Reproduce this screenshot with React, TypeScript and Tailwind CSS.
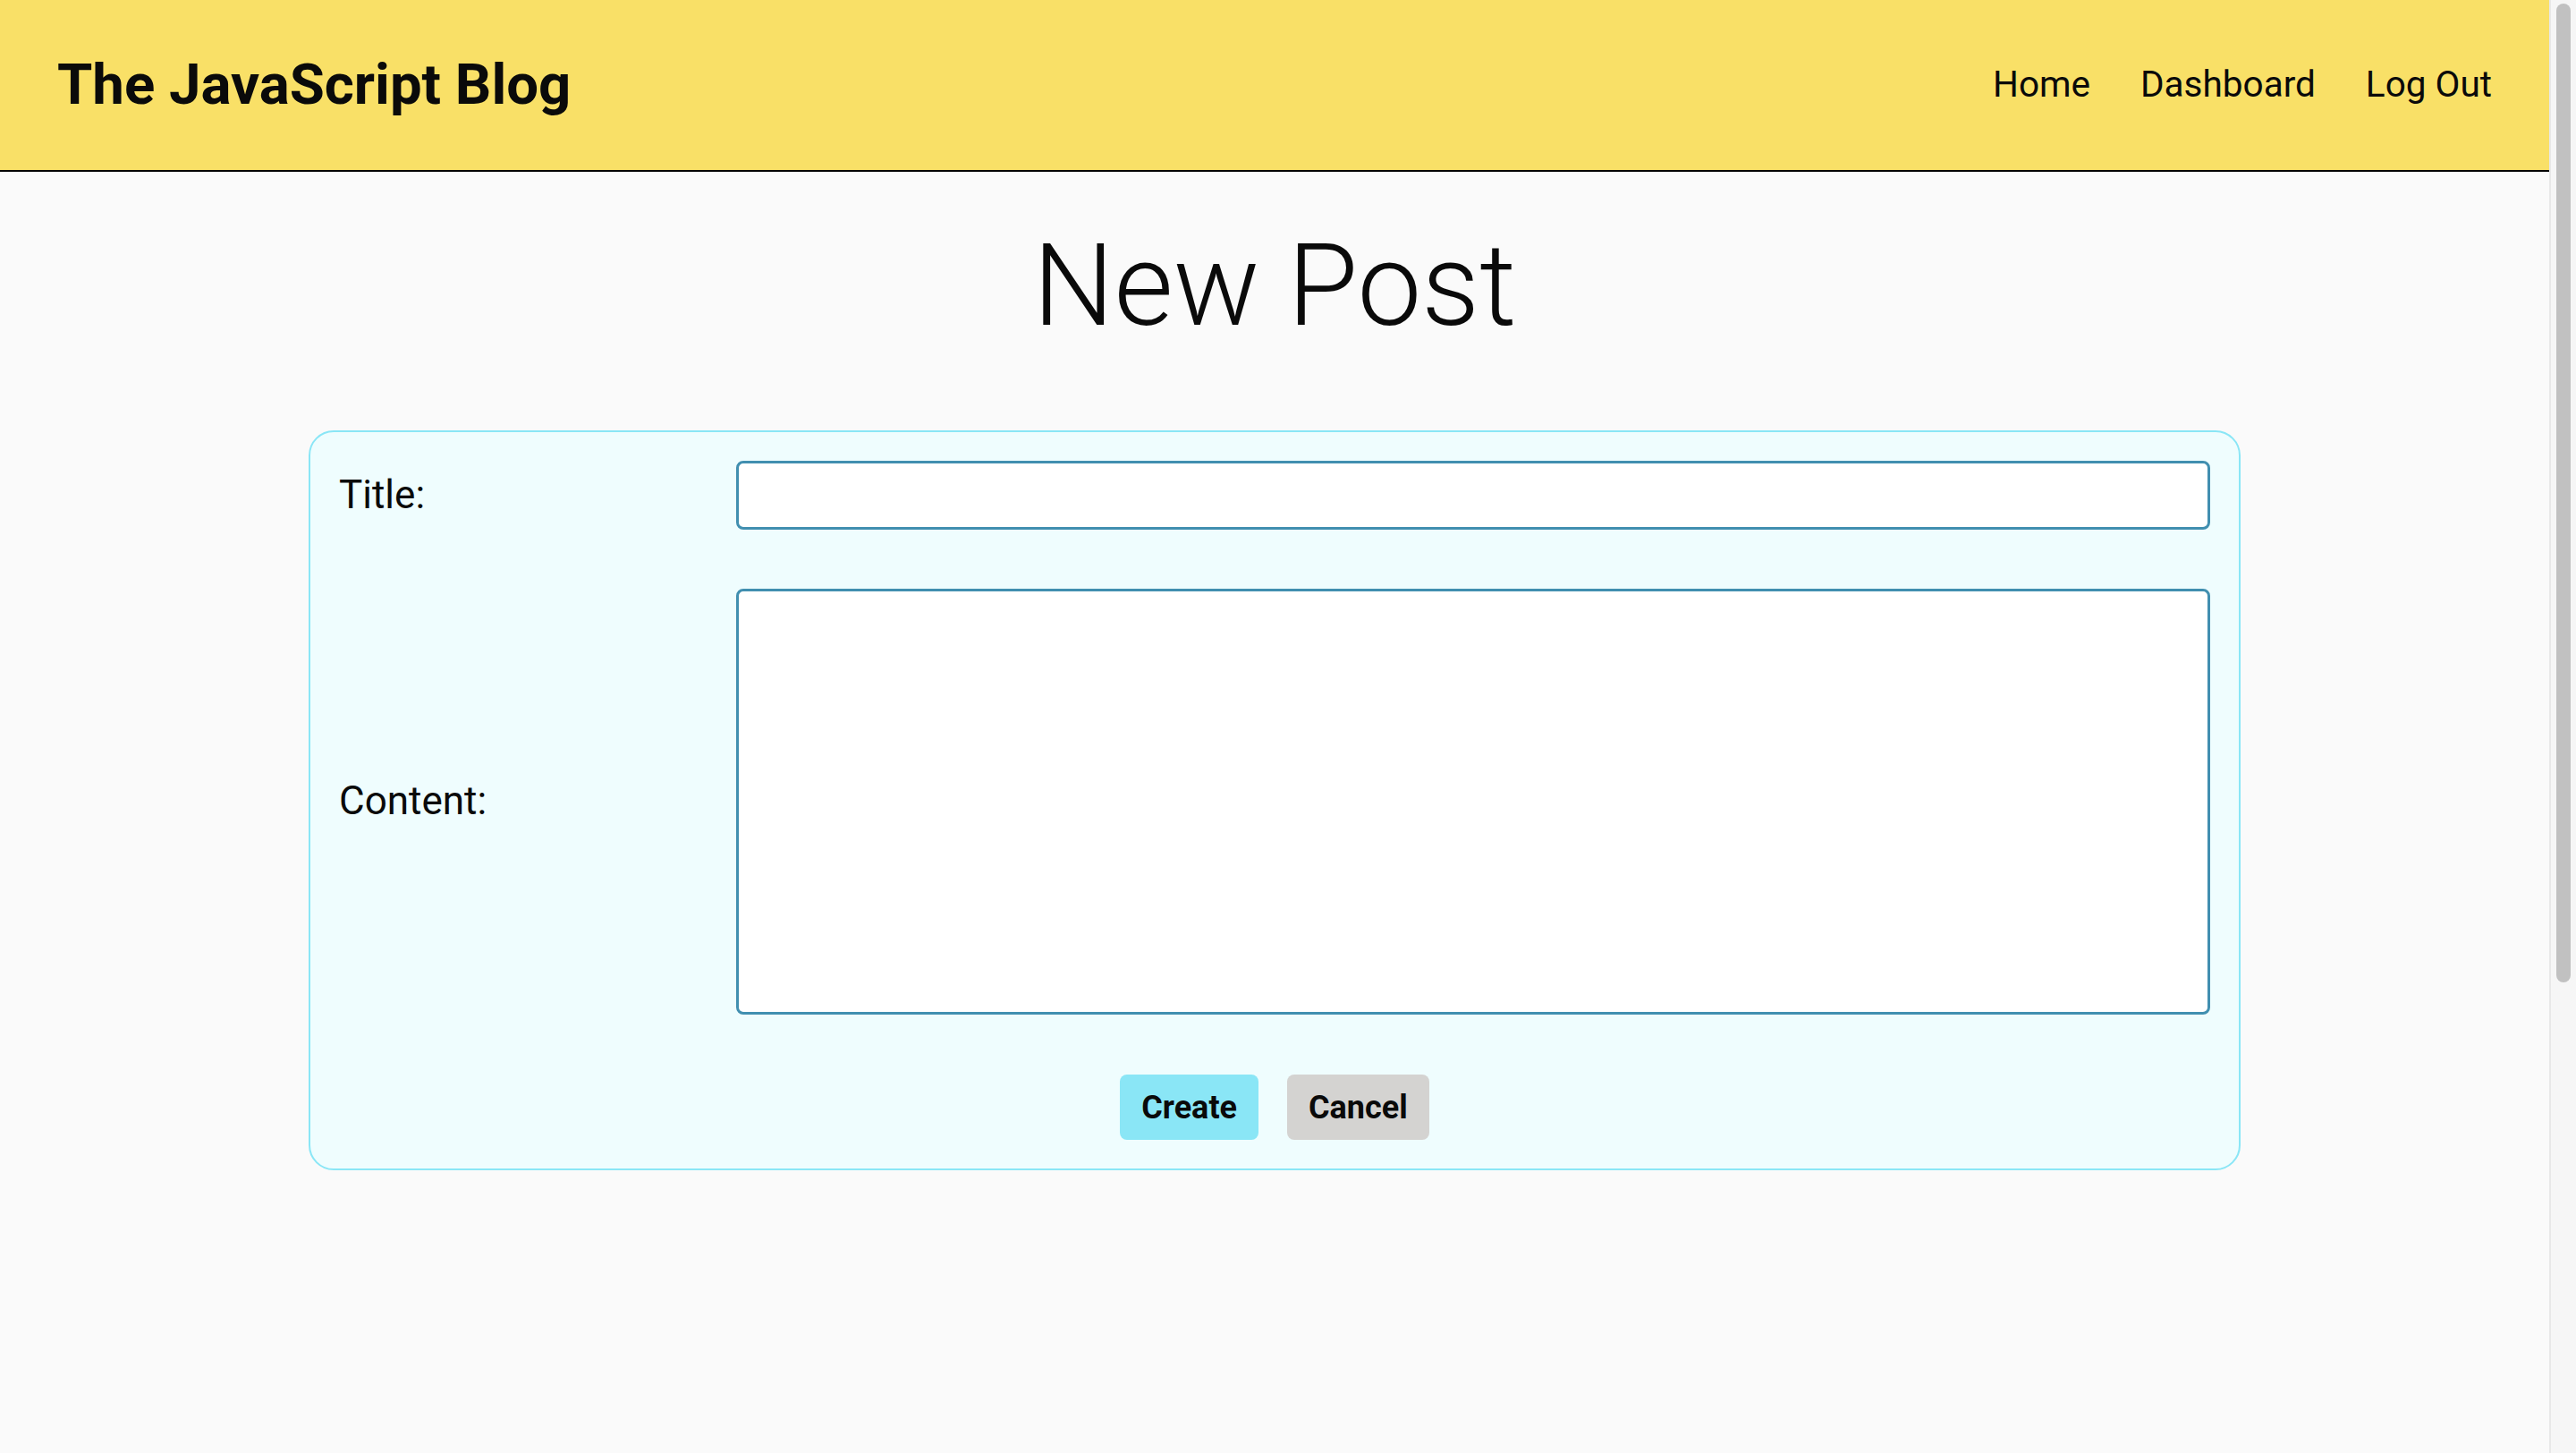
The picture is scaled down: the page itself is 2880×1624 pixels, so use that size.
import React from "react";

function Scrollbar() {
  return (
    <div className="w-[30px] shrink-0 h-full border-l-2 border-[#e8e8e8] bg-[#f6f6f6] pt-[4px] pl-[6px]">
      <div className="h-[1094px] w-[16px] rounded-full bg-[#c1c1c1]" />
    </div>
  );
}

export default function App() {
  return (
    <div
      className="flex h-screen overflow-hidden bg-[#fafafa] text-[#0a0a0a]"
      style={{ fontFamily: "Roboto, 'Liberation Sans', sans-serif" }}
    >
      <div className="flex-1 min-w-0 overflow-hidden">
        <div className="min-h-[2410px]">
          <header className="h-[192px] bg-[#f9e067] border-b-2 border-black flex items-center justify-between px-[64px]">
            <h1 className="text-[63.5px] font-bold leading-[1.172]">The JavaScript Blog</h1>
            <nav className="flex items-center gap-[56px] text-[40.5px] leading-[1.172]">
              <a href="#">Home</a>
              <a href="#">Dashboard</a>
              <a href="#">Log Out</a>
            </nav>
          </header>

          <main className="pt-[52px] flex flex-col items-center">
            <h2 className="text-[128px] font-light leading-[1.172]">New Post</h2>
            <form className="mt-[87px] w-[2160px] rounded-[28px] border-2 border-[#8ae6f6] bg-[#effdfe] p-[32px]">
              <div className="grid grid-cols-[444px_1fr] items-center gap-y-[66px] text-[44px] leading-[1.172]">
                <label htmlFor="title">Title:</label>
                <input
                  id="title"
                  type="text"
                  className="h-[77px] rounded-[8px] border-[3px] border-[#418fb0] bg-white px-3 outline-none"
                />
                <label htmlFor="content">Content:</label>
                <textarea
                  id="content"
                  className="h-[476px] resize-none rounded-[8px] border-[3px] border-[#418fb0] bg-white p-3 outline-none"
                />
              </div>
              <div className="mt-[67px] flex justify-center gap-[32px]">
                <button
                  type="submit"
                  className="h-[73px] rounded-[8px] bg-[#8ae6f6] px-[24px] text-[36px] font-bold"
                >
                  Create
                </button>
                <button
                  type="button"
                  className="h-[73px] rounded-[8px] bg-[#d4d3d1] px-[24px] text-[36px] font-bold"
                >
                  Cancel
                </button>
              </div>
            </form>
          </main>
        </div>
      </div>
      <Scrollbar />
    </div>
  );
}
